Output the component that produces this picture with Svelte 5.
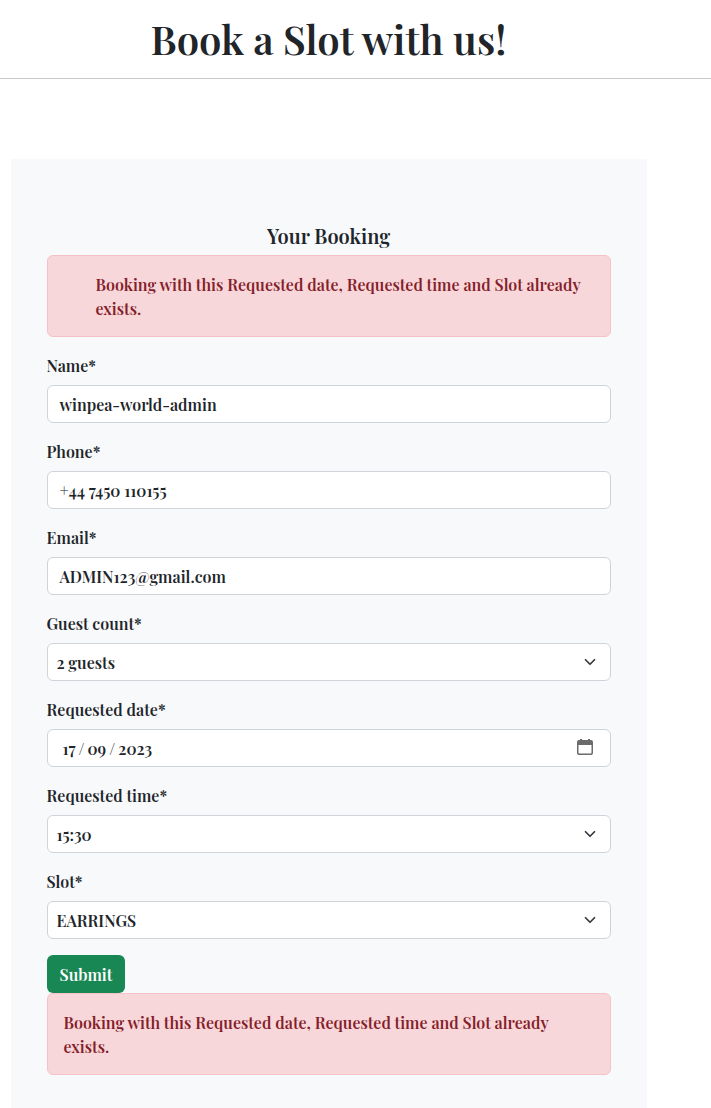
<script>
  const fields = [
    { label: 'Name*', value: 'winpea-world-admin', kind: 'text' },
    { label: 'Phone*', value: '+44 7450 110155', kind: 'text' },
    { label: 'Email*', value: 'ADMIN123@gmail.com', kind: 'text' },
    { label: 'Guest count*', value: '2 guests', kind: 'select' },
    { label: 'Requested date*', value: '17 / 09 / 2023', kind: 'date' },
    { label: 'Requested time*', value: '15:30', kind: 'select' },
    { label: 'Slot*', value: 'EARRINGS', kind: 'select' }
  ];
</script>

<header><h1>Book a Slot with us!</h1></header>

<main>
  <h2>Your Booking</h2>
  <div class="alert nested">Booking with this Requested date, Requested time and Slot already<br />exists.</div>
  {#each fields as f}
    <section>
      <div class="label">{f.label}</div>
      <div class="control {f.kind}">
        <span>{f.value}</span>
        {#if f.kind === 'select'}
          <svg width="16" height="12" viewBox="0 0 16 16"><path d="m2 5 6 6 6-6" fill="none" stroke="#343a40" stroke-width="2.3" stroke-linecap="round" stroke-linejoin="round" /></svg>
        {:else if f.kind === 'date'}
          <svg class="cal" width="16" height="16" viewBox="0 0 16 16"><path fill="#6b6b6b" fill-rule="evenodd" d="M3 0h2v1h6V0h2v1h1a2 2 0 0 1 2 2v11a2 2 0 0 1-2 2H2a2 2 0 0 1-2-2V3a2 2 0 0 1 2-2h1zM1.500 6v7.500a1 1 0 0 0 1 1h11a1 1 0 0 0 1-1V6z" /></svg>
        {/if}
      </div>
    </section>
  {/each}
  <button>Submit</button>
  <div class="alert">Booking with this Requested date, Requested time and Slot already<br />exists.</div>
</main>

<style>
  :global(body) {
    background: #fff;
    color: #212529;
    font: 600 16px/24px 'Playfair Display', 'Liberation Serif', serif;
    overflow: hidden;
  }
  header {
    height: 63px;
    border-bottom: 1px solid #c8c9ca;
    padding: 15px 54px 0 0;
    text-align: center;
  }
  h1 { margin: 0; font-size: 40px; font-weight: 600; line-height: 48px; white-space: nowrap; }
  main {
    box-sizing: border-box;
    width: 636px;
    height: 949px;
    margin: 80px 0 0 11px;
    padding: 65px 36px 0;
    background: #f8f9fb;
  }
  h2 { margin: 0; font-size: 20px; font-weight: 600; line-height: 24px; padding: 0 1px 7px 0; text-align: center; white-space: nowrap; }
  .alert {
    box-sizing: border-box;
    height: 82px;
    padding: 17px 15.500px;
    border: 1px solid #f5c2c7;
    border-radius: 6px;
    background: #f8d7da;
    color: #842029;
    white-space: nowrap;
  }
  .alert.nested { padding-left: 47.500px; margin-bottom: 16px; }
  section { margin-bottom: 16px; }
  .label { box-sizing: border-box; height: 24px; padding-top: 1px; margin: 0 0 8px -0.500px; }
  .control {
    box-sizing: border-box;
    display: flex;
    align-items: center;
    justify-content: space-between;
    height: 38px;
    padding: 2px 12px 0 11.500px;
    border: 1px solid #ced4da;
    border-radius: 6px;
    background: #fff;
    white-space: pre;
  }
  .select { padding-left: 8.500px; }
  .date { padding-left: 14.500px; padding-right: 17px; word-spacing: -0.700px; }
  .control svg { margin-top: -2px; }
  .control .cal { margin-top: -4px; }
  button {
    display: block;
    width: 78px;
    height: 38px;
    padding: 2px 0 0;
    border: 0;
    border-radius: 6px;
    background: #198754;
    color: #fff;
    font: inherit;
  }
</style>
